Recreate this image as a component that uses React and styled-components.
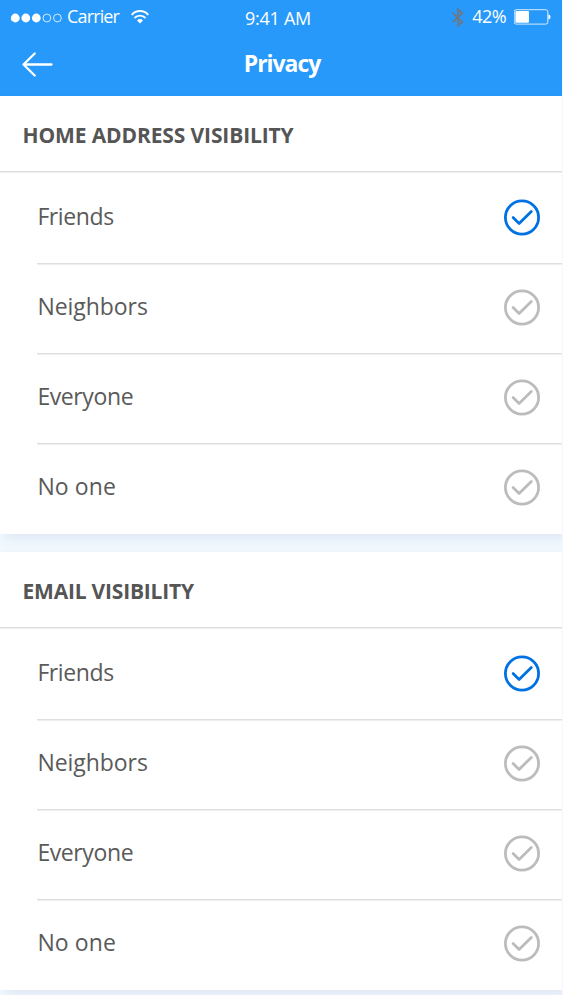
import React from 'react';
import styled, { createGlobalStyle } from 'styled-components';

const GlobalStyle = createGlobalStyle`
  * { box-sizing: border-box; }
  body { margin: 0; background: #f1f9ff; font-family: "Open Sans", "Noto Sans", sans-serif; }
`;

const Screen = styled.main`
  width: 562px;
  height: 995px;
  overflow: hidden;
  display: flex;
  flex-direction: column;
  gap: 18px;
`;

const Top = styled.div`
  display: flex;
  flex-direction: column;
`;

const Header = styled.header`
  height: 96px;
  background: #2699fb;
  color: #fff;
`;

const StatusBar = styled.div`
  height: 36px;
  padding: 0 11px;
  display: grid;
  grid-template-columns: 1fr auto 1fr;
  align-items: start;
`;

const StatusGroup = styled.div`
  display: flex;
  align-items: center;
  height: 34px;
  justify-content: ${(p) => (p.$end ? 'flex-end' : 'flex-start')};
`;

const Label = styled.span`
  font-family: "Open Sans", sans-serif;
  font-weight: 400;
  font-size: ${(p) => p.$size}px;
  letter-spacing: ${(p) => p.$track || 0}px;
  line-height: 1;
  white-space: nowrap;
`;

const CarrierName = styled(Label)`
  margin: 0 12px 2px 5px;
`;

const Clock = styled(Label)`
  line-height: 37px;
  margin-left: -6px;
`;

const Percent = styled(Label)`
  margin: 0 8px 2px 8px;
`;

const NavBar = styled.div`
  height: 60px;
  padding: 0 22px;
  display: grid;
  grid-template-columns: 31px 1fr 31px;
  align-items: start;
`;

const BackButton = styled.button`
  border: 0;
  padding: 0;
  margin-top: 16px;
  background: none;
  color: inherit;
  height: 26px;
`;

const PageTitle = styled.h1`
  margin: 0 -2px 0 0;
  font-size: 23px;
  font-weight: 700;
  letter-spacing: -1.05px;
  line-height: 55px;
  text-align: center;
`;

const Section = styled.section`
  height: 438px;
  flex: none;
  background: #fff;
  box-shadow: 5px 5px 10px rgba(75, 80, 150, 0.1);
`;

const SectionTitle = styled.h2`
  margin: 0;
  height: 77px;
  padding-left: 22.5px;
  font-size: 21px;
  font-weight: 700;
  line-height: 79px;
  letter-spacing: ${(p) => p.$track}px;
  color: #555;
  background: linear-gradient(#dedede 50%, #eee 50%) bottom / 100% 2px no-repeat;
`;

const Options = styled.ul`
  list-style: none;
  margin: 0;
  padding: 0;
`;

const Option = styled.li`
  height: 90px;
  margin-left: 37.4px;
  padding-right: 21px;
  display: flex;
  align-items: center;
  justify-content: space-between;
  color: #5a5a5a;
  & + & {
    background: linear-gradient(#dedede 50%, #eee 50%) top / 100% 2px no-repeat;
  }
`;

const OptionName = styled(Label)`
  margin-bottom: 3px;
`;

const Check = ({ active }) => (
  <svg width="38" height="38" viewBox="0 0 38 38" fill="none" stroke={active ? '#0071e3' : '#bcbcbc'} strokeWidth="2.8" strokeLinecap="round" strokeLinejoin="round">
    <circle cx="19" cy="18.5" r="16.6" />
    <path d="M10.1 18.6l6 5.8L28.3 12.4" />
  </svg>
);

const Signal = () => (
  <svg width="51" height="12" viewBox="0 0 51 12">
    {[4.3, 14.8, 25.3].map((x) => <circle key={x} cx={x} cy="7" r="4.4" fill="#fff" />)}
    {[35.9, 46.4].map((x) => <circle key={x} cx={x} cy="7" r="3.9" fill="none" stroke="#fff" strokeOpacity=".8" />)}
  </svg>
);

const Wifi = () => (
  <svg width="18" height="14" viewBox="0 0 18 14" fill="none" stroke="#fff" strokeWidth="1.9">
    <path d="M.7 4.8C5.2-.2 12.8-.2 17.3 4.8" />
    <path d="M3.5 8C6.5 4.8 11.5 4.8 14.5 8" />
    <path d="M6 10.4C7.8 8.6 10.2 8.6 12 10.4L9 13.5z" fill="#fff" stroke="none" />
  </svg>
);

const Bluetooth = () => (
  <svg width="12" height="20" viewBox="0 0 12 20" fill="none" stroke="#6c7883" strokeWidth="1.8">
    <path d="M.7 5.8L10.3 15L6 18.7V2.3L10.3 6L.7 15.2" />
  </svg>
);

const Battery = () => (
  <svg width="37" height="16" viewBox="0 0 37 16" fill="none">
    <rect x=".2" y=".7" width="33.6" height="14.4" rx="2" stroke="#fff" strokeOpacity=".8" />
    <rect x="1.4" y="2" width="13.6" height="11.8" rx="1" fill="#fff" />
    <path d="M34.4 5.2c2.8 1 2.8 4.4 0 5.4z" fill="#fff" />
  </svg>
);

const names = [
  { text: 'Friends', track: -0.4 },
  { text: 'Neighbors', track: -0.05 },
  { text: 'Everyone', track: -0.4 },
  { text: 'No one', track: 0.1 },
];

const Group = ({ title, track }) => (
  <Section>
    <SectionTitle $track={track}>{title}</SectionTitle>
    <Options>
      {names.map((n, i) => (
        <Option key={n.text}>
          <OptionName $size={23} $track={n.track}>{n.text}</OptionName>
          <Check active={i === 0} />
        </Option>
      ))}
    </Options>
  </Section>
);

export default function App() {
  return (
    <>
      <GlobalStyle />
      <Screen>
        <Top>
          <Header>
            <StatusBar>
              <StatusGroup>
                <Signal />
                <CarrierName $size={18} $track={-0.85}>Carrier</CarrierName>
                <Wifi />
              </StatusGroup>
              <Clock $size={18} $track={-0.3}>9:41 AM</Clock>
              <StatusGroup $end>
                <Bluetooth />
                <Percent $size={18} $track={-0.6}>42%</Percent>
                <Battery />
              </StatusGroup>
            </StatusBar>
            <NavBar>
              <BackButton aria-label="Back">
                <svg width="31" height="26" viewBox="0 0 31 26" fill="none" stroke="#fff" strokeWidth="2.3" strokeLinecap="round" strokeLinejoin="round">
                  <path d="M29.5 12.5H1.5M12.7 1.5L1.5 12.5L12.7 23.5" />
                </svg>
              </BackButton>
              <PageTitle>Privacy</PageTitle>
            </NavBar>
          </Header>
          <Group title="HOME ADDRESS VISIBILITY" track={-0.12} />
        </Top>
        <Group title="EMAIL VISIBILITY" track={-0.2} />
      </Screen>
    </>
  );
}
